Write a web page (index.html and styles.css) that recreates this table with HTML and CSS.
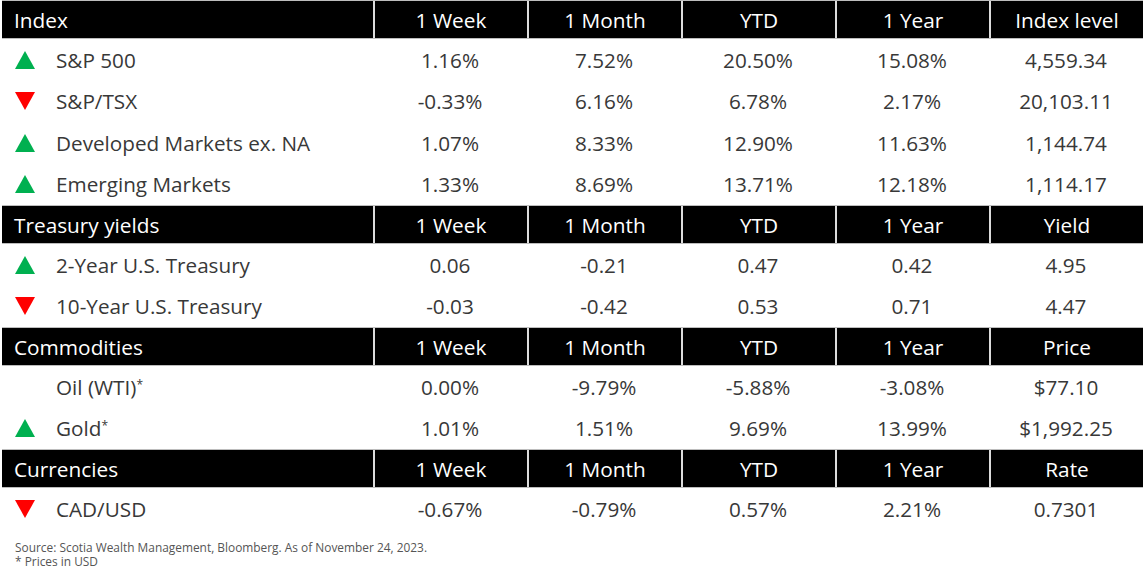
FILE: index.html
```html
<!DOCTYPE html>
<html>
<head>
<meta charset="utf-8">
<link rel="stylesheet" href="styles.css">
</head>
<body>
<div class="board">
  <div class="row head">
    <div class="cell name">Index</div>
    <div class="cell">1 Week</div>
    <div class="cell">1 Month</div>
    <div class="cell">YTD</div>
    <div class="cell">1 Year</div>
    <div class="cell">Index level</div>
  </div>
  <div class="row">
    <div class="cell name"><span class="tri up"></span>S&amp;P 500</div>
    <div class="cell">1.16%</div><div class="cell">7.52%</div><div class="cell">20.50%</div><div class="cell">15.08%</div><div class="cell">4,559.34</div>
  </div>
  <div class="row">
    <div class="cell name"><span class="tri down"></span>S&amp;P/TSX</div>
    <div class="cell">-0.33%</div><div class="cell">6.16%</div><div class="cell">6.78%</div><div class="cell">2.17%</div><div class="cell">20,103.11</div>
  </div>
  <div class="row">
    <div class="cell name"><span class="tri up"></span>Developed Markets ex. NA</div>
    <div class="cell">1.07%</div><div class="cell">8.33%</div><div class="cell">12.90%</div><div class="cell">11.63%</div><div class="cell">1,144.74</div>
  </div>
  <div class="row">
    <div class="cell name"><span class="tri up"></span>Emerging Markets</div>
    <div class="cell">1.33%</div><div class="cell">8.69%</div><div class="cell">13.71%</div><div class="cell">12.18%</div><div class="cell">1,114.17</div>
  </div>

  <div class="row head">
    <div class="cell name">Treasury yields</div>
    <div class="cell">1 Week</div>
    <div class="cell">1 Month</div>
    <div class="cell">YTD</div>
    <div class="cell">1 Year</div>
    <div class="cell">Yield</div>
  </div>
  <div class="row">
    <div class="cell name"><span class="tri up"></span>2-Year U.S. Treasury</div>
    <div class="cell">0.06</div><div class="cell">-0.21</div><div class="cell">0.47</div><div class="cell">0.42</div><div class="cell">4.95</div>
  </div>
  <div class="row">
    <div class="cell name"><span class="tri down"></span>10-Year U.S. Treasury</div>
    <div class="cell">-0.03</div><div class="cell">-0.42</div><div class="cell">0.53</div><div class="cell">0.71</div><div class="cell">4.47</div>
  </div>

  <div class="row head">
    <div class="cell name">Commodities</div>
    <div class="cell">1 Week</div>
    <div class="cell">1 Month</div>
    <div class="cell">YTD</div>
    <div class="cell">1 Year</div>
    <div class="cell">Price</div>
  </div>
  <div class="row">
    <div class="cell name"><span class="tri none"></span>Oil (WTI)<sup>*</sup></div>
    <div class="cell">0.00%</div><div class="cell">-9.79%</div><div class="cell">-5.88%</div><div class="cell">-3.08%</div><div class="cell">$77.10</div>
  </div>
  <div class="row">
    <div class="cell name"><span class="tri up"></span>Gold<sup>*</sup></div>
    <div class="cell">1.01%</div><div class="cell">1.51%</div><div class="cell">9.69%</div><div class="cell">13.99%</div><div class="cell">$1,992.25</div>
  </div>

  <div class="row head">
    <div class="cell name">Currencies</div>
    <div class="cell">1 Week</div>
    <div class="cell">1 Month</div>
    <div class="cell">YTD</div>
    <div class="cell">1 Year</div>
    <div class="cell">Rate</div>
  </div>
  <div class="row">
    <div class="cell name"><span class="tri down"></span>CAD/USD</div>
    <div class="cell">-0.67%</div><div class="cell">-0.79%</div><div class="cell">0.57%</div><div class="cell">2.21%</div><div class="cell">0.7301</div>
  </div>

  <div class="notes">
    <p>Source: Scotia Wealth Management, Bloomberg. As of November 24, 2023.</p>
    <p>* Prices in USD</p>
  </div>
</div>
</body>
</html>
```

FILE: styles.css
```css
html, body {
  margin: 0;
  padding: 0;
  background: #ffffff;
}
body {
  font-family: "Open Sans", "Liberation Sans", sans-serif;
  color: #383838;
}
.board {
  width: 1141px;
  padding-left: 2px;
}
.row {
  display: grid;
  grid-template-columns: 371px repeat(5, 154px);
  height: 41.5px;
  align-items: center;
  font-size: 20.7px;
}
.cell {
  text-align: center;
  height: 100%;
  display: flex;
  align-items: center;
  justify-content: center;
  white-space: nowrap;
}
.row .cell.name {
  justify-content: flex-start;
  padding-left: 13px;
}
.head {
  height: 39px;
  background: #000000;
  color: #ffffff;
  border-top: 1px solid #bdbdbd;
  border-bottom: 1px solid #bdbdbd;
  box-sizing: border-box;
  font-size: 20.8px;
}
.head .cell + .cell {
  border-left: 2px solid #dcdcdc;
  box-sizing: border-box;
}
.head .cell.name {
  padding-left: 12px;
}
.tri {
  display: inline-block;
  width: 0;
  height: 0;
  margin-right: 21px;
  border-left: 10.5px solid transparent;
  border-right: 10.5px solid transparent;
}
.tri.up {
  border-bottom: 18px solid #00b050;
}
.tri.down {
  border-top: 18px solid #ff0000;
}
.tri.none {
  border-bottom: 18px solid transparent;
}
sup {
  font-size: 12px;
  vertical-align: top;
  line-height: 1;
  position: relative;
  top: -2px;
}
.notes {
  padding: 10px 0 0 13px;
  font-size: 11.9px;
  color: #555555;
  line-height: 14px;
}
.notes p {
  margin: 0;
  line-height: 14px;
}
```
